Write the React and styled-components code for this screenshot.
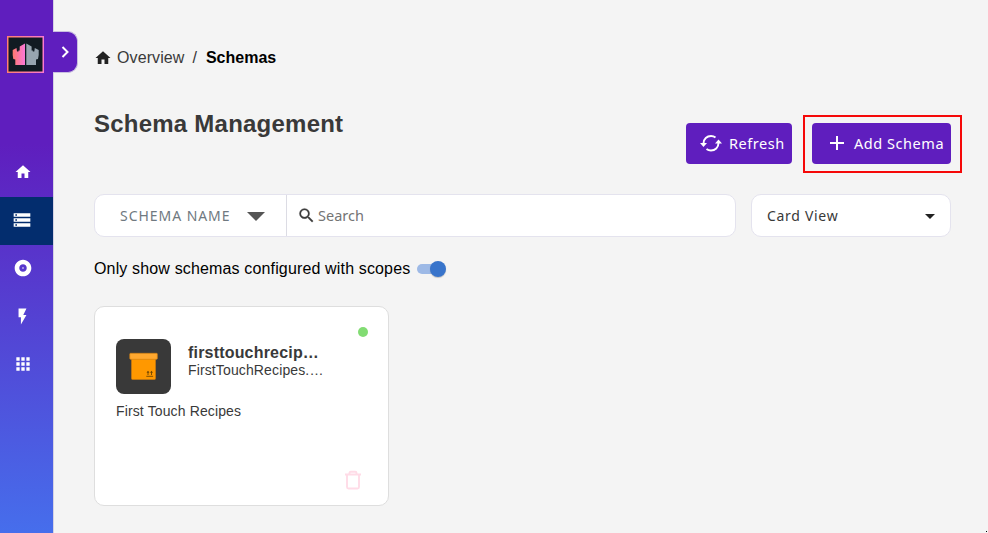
import React from 'react';
import styled, { createGlobalStyle } from 'styled-components';

const PURPLE = '#5f1ebe';

const GlobalStyle = createGlobalStyle`
  * { box-sizing: border-box; }
  body { margin: 0; background: #f4f4f4; font-family: "Liberation Sans", Arial, sans-serif; overflow: hidden; }
  #root { height: 100vh; }
`;

const Page = styled.div`
  display: flex;
  height: 533px;
  position: relative;
`;

const Sidebar = styled.nav`
  width: 54px;
  flex: none;
  display: flex;
  flex-direction: column;
  padding-top: 36px;
  border-right: 1px solid #d5d2e3;
  background: linear-gradient(180deg, ${PURPLE} 0%, ${PURPLE} 27%, #466eec 100%);
  background-clip: padding-box;
`;

const Logo = styled.div`
  width: 37px;
  height: 37px;
  margin: 0 0 76px 7px;
  flex: none;
  svg { display: block; }
`;

const NavItem = styled.a`
  height: 48px;
  display: flex;
  align-items: center;
  justify-content: center;
  padding: 0 ${(p) => p.$pad ?? 8}px 2px 0;
  color: #fff;
  background: ${(p) => (p.$active ? '#032d6e' : 'transparent')};
  svg { display: block; fill: currentColor; }
`;

const Expander = styled.button`
  position: absolute;
  left: 53px;
  top: 31px;
  width: 25px;
  height: 42px;
  padding: 0 1px 0 0;
  border: 1px solid #c9bfe0;
  border-left: 0;
  border-radius: 0 10px 10px 0;
  background: ${PURPLE};
  display: flex;
  align-items: center;
  justify-content: center;
`;

const Main = styled.main`
  flex: 1;
  padding: 47px 26px 0 40px;
  display: flex;
  flex-direction: column;
`;

const Breadcrumb = styled.div`
  display: flex;
  align-items: center;
  height: 21px;
  font-size: 16px;
  color: #333;
  svg { margin: 1px 5px 0 0; }
`;

const Crumb = styled.span`
  letter-spacing: ${(p) => p.$ls || '0'};
  color: ${(p) => (p.$current ? '#000' : '#3a3a3a')};
  font-weight: ${(p) => (p.$current ? 700 : 400)};
`;

const Slash = styled.span`
  margin: 0 9px 0 8px;
`;

const Heading = styled.div`
  display: flex;
  justify-content: space-between;
  height: 58px;
  margin-top: 47px;
`;

const Title = styled.h1`
  margin: -6px 0 0;
  font-size: 24px;
  line-height: 30px;
  letter-spacing: 0.23px;
  color: #393939;
`;

const Actions = styled.div`
  display: flex;
  align-items: flex-start;
  gap: 11px;
  > button { margin-top: 8px; }
`;

const Highlight = styled.div`
  border: 2px solid #f50808;
  width: 159px;
  height: 58px;
  padding: 6px 7px;
`;

const Button = styled.button`
  width: ${(p) => p.$w}px;
  height: 41px;
  border: 0;
  border-radius: 4px;
  padding: 0 0 1px ${(p) => p.$pad}px;
  display: flex;
  align-items: center;
  gap: ${(p) => p.$gap}px;
  background: ${PURPLE};
  color: #fff;
  font: 400 14.5px/20px "Noto Sans", sans-serif;
  letter-spacing: 0.55px;
  white-space: nowrap;
  svg { flex: none; }
`;

const Filters = styled.div`
  display: flex;
  justify-content: space-between;
  margin-top: 21px;
  width: 857px;
`;

const Field = styled.div`
  width: ${(p) => p.$w}px;
  height: 43px;
  display: flex;
  align-items: center;
  background: #fff;
  border: 1px solid #e4e3ee;
  border-radius: 10px;
  font: 400 15px/20px "Noto Sans", sans-serif;
`;

const NameSelect = styled.div`
  width: 192px;
  height: 100%;
  display: flex;
  align-items: center;
  padding-left: 25px;
  gap: 16px;
  border-right: 1px solid #dcdce4;
  color: #707980;
  font-size: 14px;
  letter-spacing: 0.95px;
  white-space: nowrap;
`;

const SearchBox = styled.div`
  display: flex;
  align-items: center;
  padding: 0 0 1px 10px;
  gap: 2px;
  color: #747474;
  font-size: 14.5px;
`;

const ViewLabel = styled.span`
  flex: 1;
  padding-left: 15px;
  font-size: 14px;
  letter-spacing: 0.7px;
  color: #393939;
`;

const CaretIcon = styled.svg`
  display: block;
  flex: none;
  margin: 1px ${(p) => p.$mr || 0}px 0 0;
`;

const ScopeRow = styled.div`
  display: flex;
  align-items: center;
  height: 20px;
  margin-top: 22px;
  font-size: 16px;
  letter-spacing: 0.15px;
  color: #000;
`;

const Track = styled.span`
  width: 27px;
  height: 10px;
  margin: 0 0 0 7px;
  border-radius: 5px;
  background: #9db9e6;
  display: flex;
  align-items: center;
  justify-content: flex-end;
`;

const Thumb = styled.span`
  width: 16px;
  height: 16px;
  flex: none;
  margin-right: -2px;
  border-radius: 50%;
  background: #3874cb;
  box-shadow: 0 1px 1px rgba(0, 0, 0, 0.2);
`;

const Card = styled.article`
  width: 295px;
  height: 200px;
  margin-top: 27px;
  padding: 20px 20px 15px 21px;
  display: flex;
  flex-direction: column;
  background: #fff;
  border: 1px solid #dedede;
  border-radius: 10px;
  color: #393939;
`;

const StatusDot = styled.span`
  align-self: flex-end;
  width: 10px;
  height: 10px;
  border-radius: 50%;
  background: #82dc73;
`;

const CardTop = styled.div`
  display: flex;
  gap: 17px;
  margin-top: 2px;
`;

const CardIcon = styled.div`
  width: 55px;
  height: 55px;
  border-radius: 8px;
  background: #393939;
  svg { display: block; }
`;

const CardNames = styled.div`
  padding-top: 4px;
`;

const CardTitle = styled.div`
  font-size: 16px;
  line-height: 19px;
  font-weight: 700;
  letter-spacing: 0.19px;
`;

const CardText = styled.div`
  font-size: 14px;
  line-height: 16px;
  letter-spacing: 0.13px;
`;

const CardDesc = styled(CardText)`
  margin-top: 9px;
`;

const CardFoot = styled.div`
  margin-top: auto;
  display: flex;
  justify-content: flex-end;
  padding-right: 7px;
`;

const CornerMark = styled.span`
  position: absolute;
  right: 1px;
  bottom: 1px;
  width: 1px;
  height: 1px;
  background: #000;
`;

const Icon = ({ size, d, ...rest }) => (
  <svg width={size} height={size} viewBox="0 0 24 24" {...rest}>
    <path d={d} />
  </svg>
);

const HOME = 'M10 20v-6h4v6h5v-8h3L12 3 2 12h3v8z';

const NAV = [
  { id: 'home', size: 18, d: HOME },
  { id: 'schemas', size: 20, pad: 10, active: true, d: 'M2 20h20v-4H2v4zm2-3h2v2H4v-2zM2 4v4h20V4H2zm4 3H4V5h2v2zm-4 7h20v-4H2v4zm2-3h2v2H4v-2z' },
  { id: 'scopes', size: 20, d: 'M12 2C6.480 2 2 6.480 2 12s4.480 10 10 10 10-4.480 10-10S17.520 2 12 2zm0 14.500c-2.490 0-4.500-2.010-4.500-4.500S9.510 7.500 12 7.500s4.500 2.010 4.500 4.500-2.010 4.500-4.500 4.500zm0-5.500c-.55 0-1 .45-1 1s.45 1 1 1 1-.45 1-1-.45-1-1-1z' },
  { id: 'actions', size: 19, d: 'M7 2v11h3v9l7-12h-4l4-8z' },
  { id: 'apps', size: 20, d: 'M4 8h4V4H4v4zm6 12h4v-4h-4v4zm-6 0h4v-4H4v4zm0-6h4v-4H4v4zm6 0h4v-4h-4v4zm6-10v4h4V4h-4zm-6 4h4V4h-4v4zm6 6h4v-4h-4v4zm0 6h4v-4h-4v4z' },
];

export default function App() {
  return (
    <Page>
      <GlobalStyle />
      <Sidebar>
        <Logo>
          <svg width="37" height="37" viewBox="0 0 37 37">
            <defs>
              <linearGradient id="frame" x1="0" x2="1">
                <stop offset="0" stopColor="#ff7f73" />
                <stop offset="1" stopColor="#fb79cd" />
              </linearGradient>
              <linearGradient id="tower" x1="0" x2="1">
                <stop offset="0" stopColor="#ff796f" />
                <stop offset="1" stopColor="#fb78d8" />
              </linearGradient>
            </defs>
            <rect x="0.75" y="0.75" width="35.5" height="35.5" fill="#111b22" stroke="url(#frame)" strokeWidth="1.5" />
            <path d="M18 7.500L12.700 10.500V14.500H11.500V15.500H10L9.500 12L5.700 14V19L6.300 23L8.300 23.500V29H18z" fill="url(#tower)" />
            <path d="M19.300 7.500L24.600 10.500V14.500H25.800V15.500H27.300L27.800 12L31.700 14V19L31 23L29 23.500V29H19.300z" fill="#97a5b0" />
          </svg>
        </Logo>
        {NAV.map((n) => (
          <NavItem key={n.id} $active={n.active} $pad={n.pad}>
            <Icon size={n.size} d={n.d} />
          </NavItem>
        ))}
      </Sidebar>
      <Expander aria-label="Expand menu">
        <svg width="10" height="14" viewBox="0 0 10 14" fill="none" stroke="#fff" strokeWidth="2">
          <path d="M2.500 2l5 5-5 5" />
        </svg>
      </Expander>
      <Main>
        <Breadcrumb>
          <Icon size={18} d={HOME} fill="#222" />
          <Crumb $ls="0.1px">Overview</Crumb>
          <Slash>/</Slash>
          <Crumb $current>Schemas</Crumb>
        </Breadcrumb>
        <Heading>
          <Title>Schema Management</Title>
          <Actions>
            <Button $w={106} $pad={14} $gap={7}>
              <svg width="22" height="22" viewBox="0 0 22 22" fill="none" stroke="#fff" strokeWidth="1.9">
                <path d="M3.500 11.500C3.500 6.800 7 4 11 4c1.900 0 3.300.6 4.500 1.600" />
                <path d="M18.500 11c0 4.700-3.500 7.500-7.500 7.500-1.900 0-3.300-.6-4.500-1.600" />
                <path d="M0 11h7l-3.500 4zM15 11.500h7l-3.500-4z" fill="#fff" stroke="none" />
              </svg>
              Refresh
            </Button>
            <Highlight>
              <Button $w={139} $pad={18} $gap={10}>
                <svg width="14" height="14" viewBox="0 0 14 14" stroke="#fff" strokeWidth="2">
                  <path d="M7 0v14M0 7h14" />
                </svg>
                Add Schema
              </Button>
            </Highlight>
          </Actions>
        </Heading>
        <Filters>
          <Field $w={642}>
            <NameSelect>
              SCHEMA NAME
              <CaretIcon width="18" height="9" viewBox="0 0 18 9">
                <path d="M0 0h18L9 9z" fill="#555" />
              </CaretIcon>
            </NameSelect>
            <SearchBox>
              <Icon size={19} fill="#3c3c3c" stroke="#3c3c3c" strokeWidth="0.3" d="M15.500 14h-.79l-.28-.27A6.471 6.471 0 0 0 16 9.500 6.500 6.500 0 1 0 9.500 16c1.610 0 3.090-.59 4.230-1.570l.27.28v.79l5 4.990L20.490 19l-4.990-5zm-6 0C7.010 14 5 11.990 5 9.500S7.010 5 9.500 5 14 7.010 14 9.500 11.990 14 9.500 14z" />
              <span>Search</span>
            </SearchBox>
          </Field>
          <Field $w={200}>
            <ViewLabel>Card View</ViewLabel>
            <CaretIcon $mr={15} width="10" height="5" viewBox="0 0 10 5">
              <path d="M0 0h10L5 5z" fill="#222" />
            </CaretIcon>
          </Field>
        </Filters>
        <ScopeRow>
          Only show schemas configured with scopes
          <Track><Thumb /></Track>
        </ScopeRow>
        <Card>
          <StatusDot />
          <CardTop>
            <CardIcon>
              <svg width="55" height="55" viewBox="0 0 55 55">
                <rect x="15.500" y="19" width="24" height="21.500" rx="1" fill="#ff9800" stroke="#c97a10" strokeWidth="0.700" />
                <rect x="13.800" y="14.300" width="27.500" height="6" rx="0.800" fill="#ffa82f" stroke="#d48213" strokeWidth="0.700" />
                <path d="M30.300 37.300h6.800M32 36v-3.500M35.500 36v-3.500" stroke="#704600" strokeWidth="0.900" />
                <path d="M30.500 33.800l1.500-2 1.500 2zM34 33.800l1.500-2 1.500 2z" fill="#704600" />
              </svg>
            </CardIcon>
            <CardNames>
              <CardTitle>firsttouchrecip…</CardTitle>
              <CardText>FirstTouchRecipes.…</CardText>
            </CardNames>
          </CardTop>
          <CardDesc>First Touch Recipes</CardDesc>
          <CardFoot>
            <svg width="16" height="20" viewBox="0 0 16 20" fill="none" stroke="#ffdce7" strokeWidth="1.900">
              <path d="M0 4.500h16M4.500 4.500V3q0-1.200 1.200-1.200h4.600q1.200 0 1.200 1.200v1.500M2 5v12q0 1.500 1.500 1.500h9q1.500 0 1.500-1.500V5" />
            </svg>
          </CardFoot>
        </Card>
      </Main>
      <CornerMark />
    </Page>
  );
}
